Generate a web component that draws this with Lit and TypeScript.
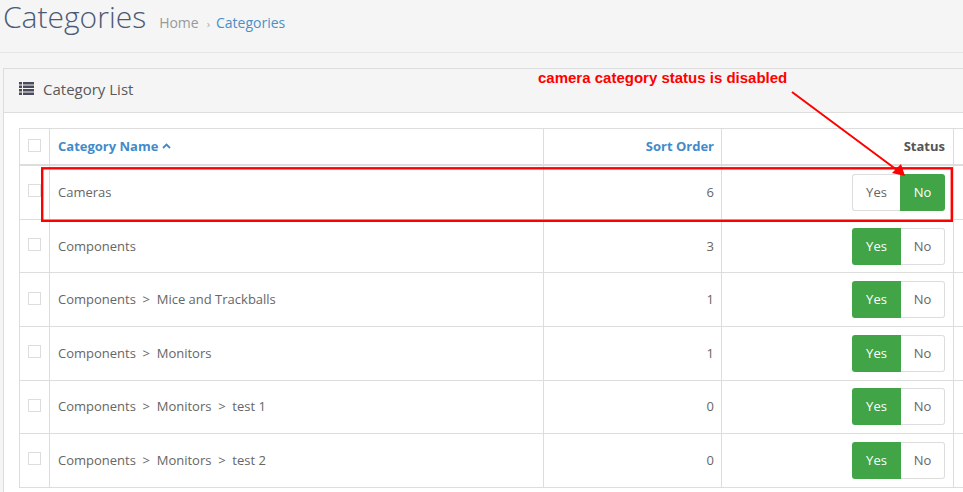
import { LitElement, html, css } from "lit";
import { customElement } from "lit/decorators.js";

const rows: [string[], number, boolean][] = [
  [["Cameras"], 6, false],
  [["Components"], 3, true],
  [["Components", "Mice and Trackballs"], 1, true],
  [["Components", "Monitors"], 1, true],
  [["Components", "Monitors", "test 1"], 0, true],
  [["Components", "Monitors", "test 2"], 0, true],
];

@customElement("app-root")
export class AppRoot extends LitElement {
  static styles = css`
    :host {
      display: block;
      position: relative;
      width: 963px;
      height: 492px;
      overflow: hidden;
      background: #f5f5f5;
      font-family: "Open Sans", sans-serif;
      font-size: 13px;
      color: #666;
    }
    .head {
      height: 53px;
      box-sizing: border-box;
      border-bottom: 1px solid #e5e5e5;
      display: flex;
      align-items: baseline;
      padding-left: 3px;
      gap: 13px;
    }
    h1 {
      margin: 0;
      font-size: 30px;
      font-weight: 300;
      line-height: 34px;
      color: #4b5a74;
    }
    .crumbs {
      display: flex;
      align-items: baseline;
      font-size: 14px;
      color: #999;
    }
    .crumbs i { font-style: normal; font-size: 11px; margin: 0 6px 0 8px; color: #aaa; }
    .crumbs a { color: #4a90c8; }
    .panel {
      margin: 15px 0 0 3px;
      width: 1000px;
      border: 1px solid #ddd;
      background: #fff;
    }
    .panel-head {
      height: 44px;
      box-sizing: border-box;
      background: #f5f5f5;
      border-bottom: 1px solid #ddd;
      display: flex;
      align-items: center;
      gap: 9px;
      padding: 0 0 4px 15px;
      font-size: 15px;
      color: #595959;
    }
    .panel-head svg { display: block; }
    .panel-body { padding: 15px; }
    .table {
      border: 1px solid #ddd;
      border-bottom: 0;
      width: 990px;
    }
    .row {
      display: grid;
      grid-template-columns: 30px 494px 178px 232px 1fr;
      height: 53.6px;
      box-sizing: border-box;
      border-bottom: 1px solid #ddd;
    }
    .row.th { height: 37.2px; border-bottom-width: 2px; font-weight: 700; }
    .cell {
      display: flex;
      align-items: center;
      padding: 0 8px 1px;
      border-right: 1px solid #ddd;
      min-width: 0;
      white-space: nowrap;
    }
    .cell.r { justify-content: flex-end; }
    .cell.o { padding-right: 7px; }
    .cell.s { padding-bottom: 0; }
    .cell.c { padding: 18.3px 0 0 8px; align-items: flex-start; }
    .th .cell.c { padding-top: 10px; }
    .th .cell.r { color: #555; }
    .cell:last-child { border-right: 0; }
    .box {
      width: 13px;
      height: 13px;
      box-sizing: border-box;
      border: 1px solid #ddd;
      background: #fff;
    }
    .th a { color: #428bca; }
    .sort { margin-left: 4px; display: block; }
    .sep { margin: 0 6.7px; }
    .toggle {
      display: flex;
      height: 37px;
      color: #666;
    }
    .toggle span {
      display: flex;
      align-items: center;
      justify-content: center;
      box-sizing: border-box;
      background: #fff;
      border: 1px solid #ddd;
      padding-bottom: 1px;
    }
    .yes { width: 48px; border-right: 0 !important; border-radius: 3px 0 0 3px; }
    .no { width: 45px; border-left: 0 !important; border-radius: 0 3px 3px 0; }
    .yes.on { width: 49px; }
    .yes.on + .no { width: 44px; }
    .toggle span.on {
      background: #41a447;
      color: #fff;
      border: 0;
    }
    .rect {
      position: absolute;
      left: 0;
      top: 0;
    }
    .note {
      position: absolute;
      left: 538px;
      top: 69px;
      font: 700 15px "Liberation Sans", sans-serif;
      color: #fe0000;
    }
  `;

  render() {
    return html`
      <div class="head">
        <h1>Categories</h1>
        <div class="crumbs"><span>Home</span><i>›</i><a>Categories</a></div>
      </div>
      <div class="panel">
        <div class="panel-head">
          <svg width="15" height="13" viewBox="0 0 15 13" fill="#4a4a5a">
            <rect x="0" y="0" width="3" height="2.5" /><rect x="4" y="0" width="11" height="2.5" />
            <rect x="0" y="3.5" width="3" height="2.5" /><rect x="4" y="3.5" width="11" height="2.5" />
            <rect x="0" y="7" width="3" height="2.5" /><rect x="4" y="7" width="11" height="2.5" />
            <rect x="0" y="10.5" width="3" height="2.5" /><rect x="4" y="10.5" width="11" height="2.5" />
          </svg>
          <span>Category List</span>
        </div>
        <div class="panel-body">
          <div class="table">
            <div class="row th">
              <div class="cell c"><div class="box"></div></div>
              <div class="cell"><a>Category Name</a>
                <svg class="sort" width="9" height="6" viewBox="0 0 9 6" fill="none" stroke="#428bca" stroke-width="1.8"><path d="M1 5l3.5-3.5L8 5" /></svg>
              </div>
              <div class="cell r o"><a>Sort Order</a></div>
              <div class="cell r">Status</div>
              <div class="cell"></div>
            </div>
            ${rows.map(
              ([path, order, enabled]) => html`
                <div class="row">
                  <div class="cell c"><div class="box"></div></div>
                  <div class="cell">
                    ${path.map(
                      (p, i) => html`${i > 0 ? html`<span class="sep">&gt;</span>` : ""}${p}`
                    )}
                  </div>
                  <div class="cell r o">${order}</div>
                  <div class="cell r s">
                    <div class="toggle">
                      <span class="yes ${enabled ? "on" : ""}">Yes</span>
                      <span class="no ${enabled ? "" : "on"}">No</span>
                    </div>
                  </div>
                  <div class="cell"></div>
                </div>
              `
            )}
          </div>
        </div>
      </div>
      <div class="note">camera category status is disabled</div>
      <svg class="rect" width="963" height="492" viewBox="0 0 963 492" fill="none">
        <rect x="42.2" y="168.3" width="909.6" height="52.5" stroke="#fe0000" stroke-width="2.4" />
        <path d="M792 92L897 170" stroke="#fe0000" stroke-width="2" />
        <path d="M905 176L892 173L901 164Z" fill="#fe0000" />
      </svg>
    `;
  }
}
